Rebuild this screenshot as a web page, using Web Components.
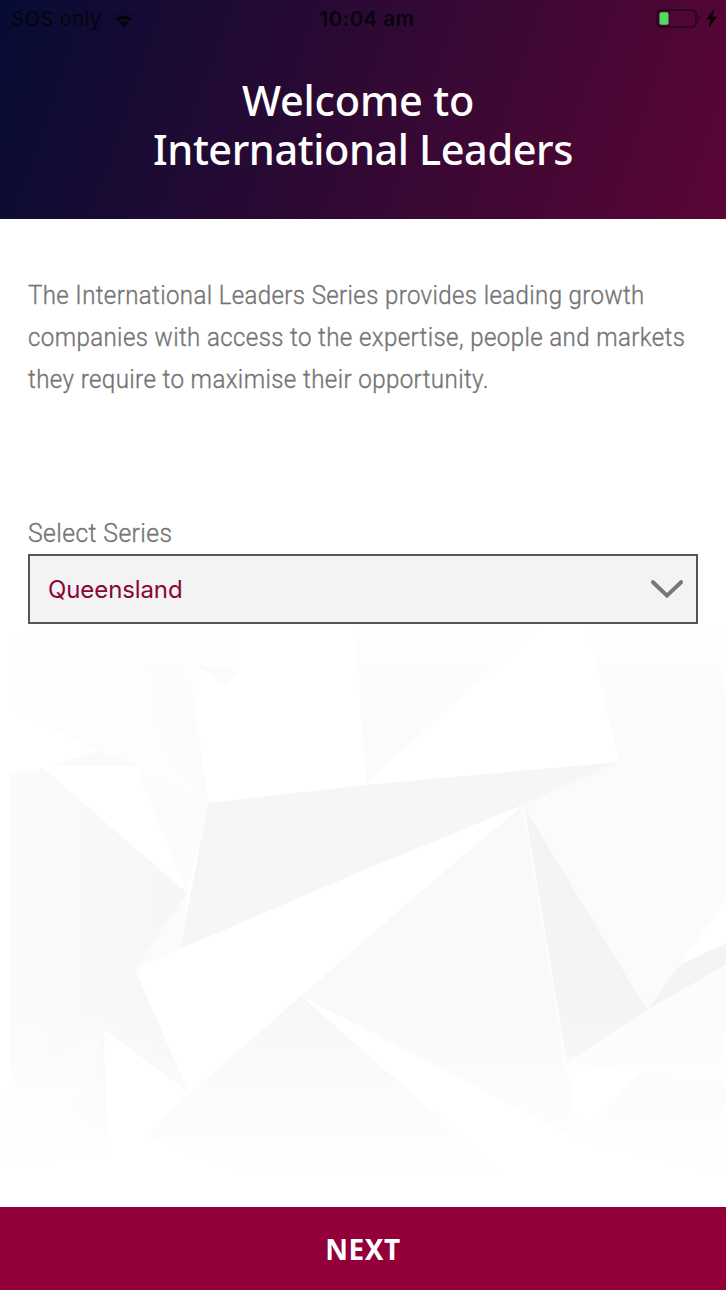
<!DOCTYPE html>
<html lang="en">
<head>
<meta charset="utf-8">
<meta name="viewport" content="width=device-width, initial-scale=1">
<title>International Leaders</title>
<style>
  html, body {
    margin: 0;
    height: 100%;
    background: #ffffff;
  }
</style>
</head>
<body>
<welcome-screen></welcome-screen>

<script>
/**
 * Small base class: attaches the shadow root and fills it from template()
 */
class BaseElement extends HTMLElement {
  constructor() {
    super();
    this.attachShadow({ mode: 'open' });
  }

  connectedCallback() {
    this.shadowRoot.innerHTML = this.template();
  }
}

// Phone status bar: carrier, clock, battery
class StatusBar extends BaseElement {
  template() {
    return `
      <style>
        :host {
          display: grid;
          grid-template-columns: 1fr auto 1fr;
          align-items: center;
          height: 37px;
          padding: 0 9px 0 11px;
          font-family: Inter, sans-serif;
          font-size: 20.4px;
          font-weight: 400;
          color: #08030f;
        }

        .carrier, .power {
          display: flex;
          align-items: center;
        }

        .carrier { gap: 10px; letter-spacing: 0.3px; }
        .clock { font-weight: 600; letter-spacing: 0.5px; padding-left: 6px; }
        .power { justify-content: flex-end; gap: 4px; }
        svg { display: block; }
      </style>
      <div class="carrier">
        <span><slot name="carrier"></slot></span>
        <svg width="24" height="18" viewBox="0 0 22 16">
          <path d="M0 4.8Q11-4.2 22 4.8L20 7Q11-.4 2 7Z" fill="#120a2a"/>
          <path d="M3.4 8Q11 1.4 18.6 8L16.2 10.5Q11 6 5.8 10.5Z" fill="#050208"/>
          <path d="M7 11.5Q11 8 15 11.5L11 15.6Z" fill="#050208"/>
        </svg>
      </div>
      <div class="clock"><slot name="clock"></slot></div>
      <div class="power">
        <svg width="46" height="20" viewBox="0 0 46 20">
          <rect x="1.2" y="1" width="39" height="17" rx="4.5" fill="none" stroke="#2b0420" stroke-width="2"/>
          <rect x="3.5" y="3.2" width="9" height="12.6" rx="1.8" fill="#51dc66"/>
          <path d="M42.5 6.5Q45.5 9.5 42.5 12.5Z" fill="#2b0420"/>
        </svg>
        <svg width="11" height="19" viewBox="0 0 11 19">
          <path d="M8 0L0 10.5H4.4L2.6 19L11 7.7H6.3Z" fill="#080006"/>
        </svg>
      </div>
    `;
  }
}

// Gradient header with the two-line title
class PageHeader extends BaseElement {
  template() {
    return `
      <style>
        :host {
          display: block;
          height: 219px;
          background: linear-gradient(109deg, #060c34 0%, #2d0933 47%, #5b0535 100%);
        }

        h1 {
          display: flex;
          flex-direction: column;
          align-items: center;
          margin: 0;
          padding-top: 39px;
          color: #ffffff;
          font-family: "Noto Sans", sans-serif;
          font-size: 41.5px;
          font-weight: 500;
          line-height: 49px;
          white-space: nowrap;
        }

        .top { margin-right: 10px; letter-spacing: -0.2px; }
        .bottom { letter-spacing: -0.43px; }
      </style>
      <slot name="status"></slot>
      <h1>
        <span class="top"><slot name="first"></slot></span>
        <span class="bottom"><slot name="second"></slot></span>
      </h1>
    `;
  }
}

// Intro paragraph, one block per line
class IntroText extends BaseElement {
  template() {
    return `
      <style>
        :host {
          display: block;
          box-sizing: border-box;
          height: 238px;
          padding: 55px 28px 0;
          font-size: 25.5px;
          line-height: 42px;
        }
      </style>
      <slot></slot>
    `;
  }
}

// Single line of slightly condensed text
class TextLine extends BaseElement {
  template() {
    return `
      <style>
        :host {
          display: block;
          white-space: nowrap;
          letter-spacing: 0.4px;
          -webkit-text-stroke: 0.35px currentColor;
          transform: scaleX(${this.getAttribute('stretch') || 1});
          transform-origin: left;
        }
      </style>
      <slot></slot>
    `;
  }
}

// Labelled select box
class SeriesSelect extends BaseElement {
  template() {
    return `
      <style>
        :host {
          display: block;
          padding: 0 28px;
        }

        label {
          display: block;
          margin-top: 58px;
          height: 39px;
          font-size: 25.5px;
          line-height: 36px;
        }

        button {
          display: flex;
          align-items: center;
          justify-content: space-between;
          box-sizing: border-box;
          width: 100%;
          height: 70px;
          padding: 0 13px 0 18px;
          border: 2px solid #555456;
          border-radius: 0;
          background: #f3f3f3;
          color: #8a0538;
          font-family: Inter, sans-serif;
          font-size: 24px;
          letter-spacing: -0.1px;
        }

        svg { margin-top: 2px; }
      </style>
      <label for="series"><text-line stretch="0.971">${this.getAttribute('label')}</text-line></label>
      <button id="series" type="button">
        <span><slot></slot></span>
        <svg width="32" height="20" viewBox="0 0 32 20">
          <path d="M2 2.2L16 15.6L30 2.2" fill="none" stroke="#777777" stroke-width="4" stroke-linecap="round"/>
        </svg>
      </button>
    `;
  }
}

// Faceted paper backdrop, fading to white at both ends
class FacetBackdrop extends BaseElement {
  template() {
    return `
      <style>
        :host {
          display: block;
          flex: 1;
          min-height: 0;
          overflow: hidden;
        }

        svg { display: block; width: 100%; height: 100%; }
      </style>
      <svg viewBox="0 624 726 583" preserveAspectRatio="none" aria-hidden="true">
        <defs>
          <linearGradient id="fade" x1="0" y1="0" x2="0" y2="1">
            <stop offset="0" stop-color="#fff" stop-opacity="0.7"/>
            <stop offset="0.25" stop-color="#fff" stop-opacity="0"/>
            <stop offset="0.65" stop-color="#fff" stop-opacity="0"/>
            <stop offset="0.94" stop-color="#fff" stop-opacity="1"/>
          </linearGradient>
          <linearGradient id="left" x1="0" y1="0" x2="1" y2="0">
            <stop offset="0" stop-color="#fbfbfb"/>
            <stop offset="1" stop-color="#f6f6f6"/>
          </linearGradient>
        </defs>
        <polygon points="12,632 185,628 190,660 208,801 137,766 100,752 12,710" fill="#fdfdfd"/>
        <polygon points="140,655 186,655 208,801 170,760" fill="#fbfbfb"/>
        <polygon points="98,751 137,766 50,766" fill="#fafafa"/>
        <polygon points="190,628 237,628 237,672 190,660" fill="#fdfdfd"/>
        <polygon points="195,664 239,671 227,686" fill="#f8f8f8"/>
        <polygon points="355,628 538,628 366,783" fill="#fbfbfb"/>
        <polygon points="588,628 726,624 726,716 619,762" fill="#fbfbfb"/>
        <polygon points="137,768 208,801 187,893" fill="#fcfcfc"/>
        <polygon points="10,774 43,768 187,893 135,970 189,1093 105,1030 10,1090" fill="url(#left)"/>
        <polygon points="187,893 180,949 135,970" fill="#fbfbfb"/>
        <polygon points="208,803 365,785 619,762 523,805 364,870 180,949" fill="#f6f6f6"/>
        <polygon points="523,805 619,762 726,716 726,898 680,965 647,1010" fill="#fbfbfb"/>
        <polygon points="523,805 566,1063 580,1140 301,996 405,905" fill="#f9f9f9"/>
        <polygon points="523,805 647,1010 566,1063" fill="#f4f4f4"/>
        <polygon points="680,965 726,943 726,965 647,1010" fill="#f4f4f4"/>
        <polygon points="647,1010 726,965 726,1085 566,1063" fill="#fcfcfc"/>
        <polygon points="638,1074 726,1086 726,1175 580,1140" fill="#f9f9f9"/>
        <polygon points="301,996 505,1175 250,1175 145,1135 190,1093" fill="#f7f7f7"/>
        <polygon points="104,1031 12,1086 0,1100 0,1165 105,1155" fill="#fbfbfb"/>
        <polygon points="104,1031 107,1155 75,1115" fill="#f8f8f8"/>
        <polyline points="523,805 566,1063 580,1140" fill="none" stroke="#fdfdfd" stroke-width="2"/>
        <rect x="0" y="624" width="726" height="583" fill="url(#fade)"/>
      </svg>
    `;
  }
}

// Full-width action button at the bottom
class NextButton extends BaseElement {
  template() {
    return `
      <style>
        :host { display: block; }

        button {
          display: block;
          width: 100%;
          height: 83px;
          padding: 0;
          border: none;
          background: #930039;
          color: #ffffff;
          font-family: "Noto Sans", sans-serif;
          font-size: 28px;
          font-weight: 700;
          letter-spacing: 0.5px;
        }
      </style>
      <button type="button"><slot></slot></button>
    `;
  }
}

class WelcomeScreen extends BaseElement {
  template() {
    return `
      <style>
        :host {
          display: flex;
          flex-direction: column;
          height: 1290px;
          width: 726px;
          overflow: hidden;
          background: #ffffff;
          color: #747474;
          font-family: Roboto, sans-serif;
          font-weight: 300;
        }
      </style>
      <page-header>
        <status-bar slot="status">
          <span slot="carrier">SOS only</span>
          <span slot="clock">10:04 am</span>
        </status-bar>
        <span slot="first">Welcome to</span>
        <span slot="second">International Leaders</span>
      </page-header>
      <intro-text>
        <text-line stretch="0.943">The International Leaders Series provides leading growth</text-line>
        <text-line stretch="0.945">companies with access to the expertise, people and markets</text-line>
        <text-line stretch="0.947">they require to maximise their opportunity.</text-line>
      </intro-text>
      <series-select label="Select Series">Queensland</series-select>
      <facet-backdrop></facet-backdrop>
      <next-button>NEXT</next-button>
    `;
  }
}

customElements.define('status-bar', StatusBar);
customElements.define('page-header', PageHeader);
customElements.define('text-line', TextLine);
customElements.define('intro-text', IntroText);
customElements.define('series-select', SeriesSelect);
customElements.define('facet-backdrop', FacetBackdrop);
customElements.define('next-button', NextButton);
customElements.define('welcome-screen', WelcomeScreen);
</script>
</body>
</html>
